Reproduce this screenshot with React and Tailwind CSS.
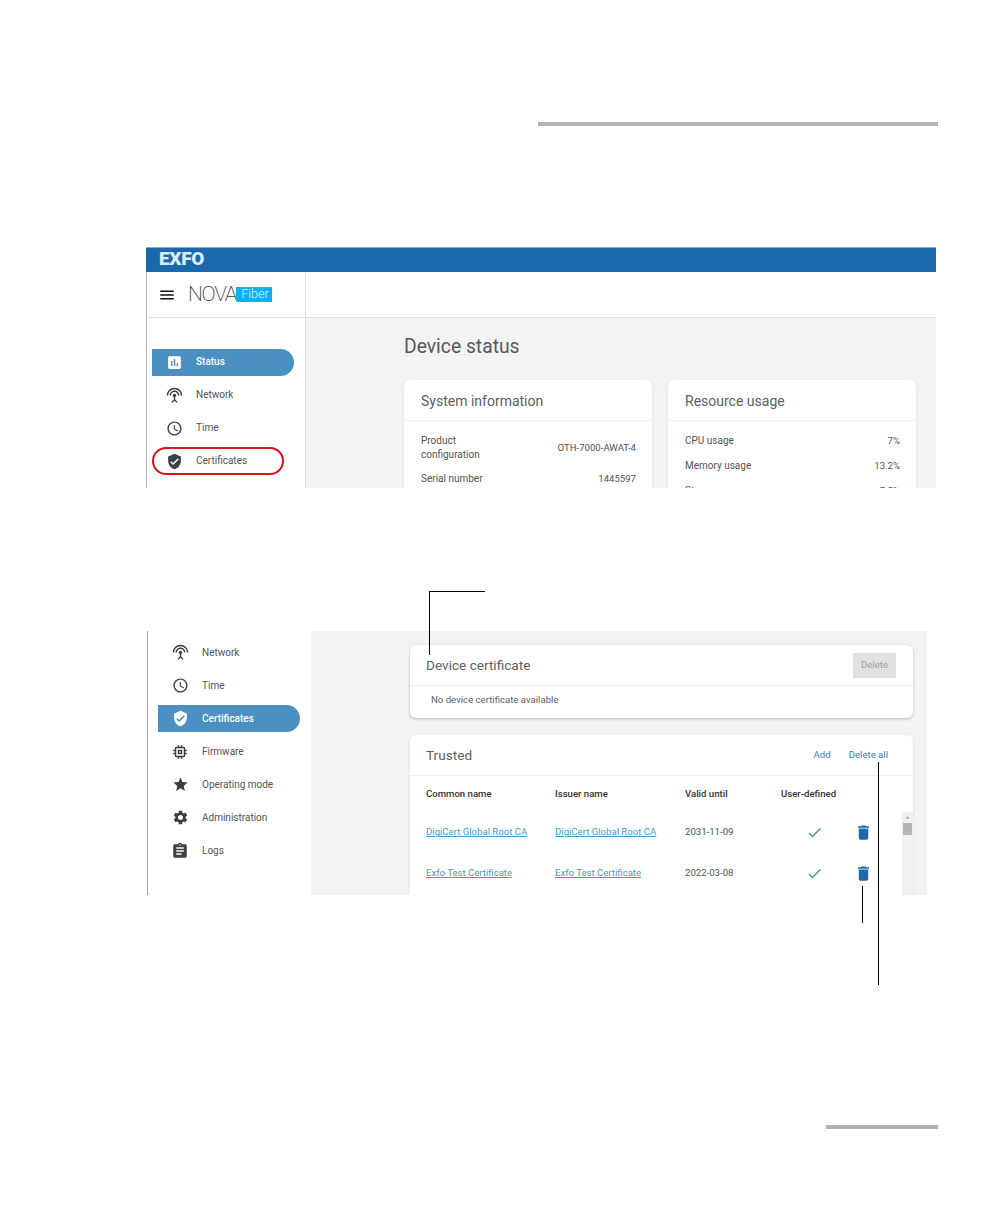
import React from "react";
import {
  MdAssessment, MdSettingsInputAntenna, MdAccessTime, MdVerifiedUser, MdMemory,
  MdStar, MdSettings, MdAssignment, MdDelete, MdCheck, MdMenu, MdArrowDropUp,
} from "react-icons/md";

function NavRow({ icon: Icon, label, active, raised, size = 17 }) {
  return (
    <div className={"flex h-[27px] items-center rounded-r-full " + (active ? "bg-[#4a90c2] font-medium text-white" : "text-[#505458]")}>
      <span className="flex w-[44px] shrink-0 justify-center">
        <Icon size={size} className={active ? "text-white" : "text-[#3c4043]"} />
      </span>
      <span className={"text-[10px] leading-none " + (raised ? "pb-[1px]" : "")}>{label}</span>
    </div>
  );
}

function InfoRow({ label, value, h = "h-[25px]" }) {
  return (
    <div className={"flex items-center justify-between text-[10px] leading-[14px] text-[#505458] " + h}>
      <span>{label}</span>
      <span className="text-[9.6px]">{value}</span>
    </div>
  );
}

function CardHeader({ title }) {
  return (
    <div className="flex h-[41px] items-center border-b border-[#eeeeee] px-[17px] pt-[3px]">
      <span className="text-[14px] text-[#5c6064]">{title}</span>
    </div>
  );
}

function Row({ name, date }) {
  const link = "text-[#4a9bc7] underline";
  return (
    <div className="flex h-[41px] items-center text-[9.6px]">
      <span className={"w-[129px] " + link}>{name}</span>
      <span className={"w-[130px] " + link}>{name}</span>
      <span className="w-[96px] text-[#505458]">{date}</span>
      <span className="flex w-[67px] justify-center"><MdCheck size={17} className="text-[#4a90c2]" /></span>
      <span className="flex w-[30px] justify-center"><MdDelete size={19} className="text-[#1d68ad]" /></span>
    </div>
  );
}

export default function App() {
  return (
    <div className="relative h-[1224px] w-[1008px] overflow-hidden bg-white font-['Roboto',sans-serif]">
      <div className="ml-[538px] mt-[122px] h-[4px] w-[400px] bg-[#b3b3b3]" />

      {/* Figure 1 */}
      <div className="ml-[146px] mt-[121px] flex h-[241px] w-[790px] flex-col overflow-hidden">
        <div className="flex h-[25px] shrink-0 items-center border-t border-[#8fa9bf] bg-[#1b69ad] pb-[3px] pl-[13px] text-[19px] font-black leading-none tracking-[-0.3px] text-[#dfeaf3]">
          EXFO
        </div>
        <div className="flex min-h-0 flex-1 border-l border-[#b5b5b5]">
          <div className="flex w-[159px] shrink-0 flex-col border-r border-[#dddddd] bg-white">
            <div className="flex h-[46px] shrink-0 items-center border-b border-[#dddddd] pl-[11px]">
              <MdMenu size={18} className="text-[#111111]" />
              <span className="ml-[12px] text-[21px] font-extralight leading-none tracking-[-1.3px] text-[#3a3a3a]">NOVA</span>
              <span className="flex h-[15px] w-[36px] items-center bg-[#0db2ec] pl-[5px] text-[12.5px] font-light leading-none text-[#d8f3fc]">Fiber</span>
            </div>
            <div className="flex flex-col gap-[6px] pl-[5px] pr-[11px] pt-[31px]">
              <NavRow icon={MdAssessment} label="Status" active raised />
              <NavRow icon={MdSettingsInputAntenna} label="Network" raised />
              <NavRow icon={MdAccessTime} label="Time" raised />
              <NavRow icon={MdVerifiedUser} label="Certificates" raised />
            </div>
          </div>
          <div className="flex min-w-0 flex-1 flex-col">
            <div className="h-[46px] shrink-0 border-b border-[#dddddd] bg-white" />
            <div className="flex-1 bg-[#f3f3f3] pl-[98px] pr-[20px] pt-[17px]">
              <h1 className="text-[19.3px] leading-[24px] text-[#55595c]">Device status</h1>
              <div className="mt-[21px] flex gap-[16px]">
                <div className="h-[200px] w-[248px] rounded-t-[6px] bg-white shadow-sm">
                  <CardHeader title="System information" />
                  <div className="pl-[17px] pr-4 pt-[13px]">
                    <InfoRow h="h-[28px]" label={<>Product<br />configuration</>} value="OTH-7000-AWAT-4" />
                    <div className="mt-[4px]"><InfoRow label="Serial number" value="1445597" /></div>
                  </div>
                </div>
                <div className="h-[200px] w-[248px] rounded-t-[6px] bg-white shadow-sm">
                  <CardHeader title="Resource usage" />
                  <div className="pl-[17px] pr-4 pt-[7px]">
                    <InfoRow label="CPU usage" value="7%" />
                    <InfoRow label="Memory usage" value="13.2%" />
                    <InfoRow label="Storage usage" value="7.5%" />
                  </div>
                </div>
              </div>
            </div>
          </div>
        </div>
      </div>

      {/* Figure 2 */}
      <div className="ml-[147px] mt-[143px] flex h-[264px] w-[780px] overflow-hidden">
        <div className="flex w-[164px] shrink-0 flex-col gap-[6px] border-l border-[#a8a8a8] bg-white pl-[10px] pr-[11px] pt-[8px]">
          <NavRow icon={MdSettingsInputAntenna} label="Network" />
          <NavRow icon={MdAccessTime} label="Time" />
          <NavRow icon={MdVerifiedUser} label="Certificates" active />
          <NavRow icon={MdMemory} size={18} label="Firmware" />
          <NavRow icon={MdStar} label="Operating mode" />
          <NavRow icon={MdSettings} label="Administration" />
          <NavRow icon={MdAssignment} size={18} label="Logs" />
        </div>
        <div className="flex min-w-0 flex-1 flex-col gap-[17px] bg-[#f3f3f3] pl-[99px] pr-[14px] pt-[14px]">
          <div className="h-[73px] shrink-0 rounded-[6px] bg-white shadow-[0_1px_3px_rgba(0,0,0,0.25)]">
            <div className="flex h-[41px] items-center justify-between border-b border-[#eeeeee] pl-4 pr-[17px]">
              <span className="text-[13.6px] text-[#5c6064]">Device certificate</span>
              <span className="flex h-[25px] w-[43px] items-center justify-center bg-[#e0e0e0] text-[9.6px] text-[#a3a3a3]">Delete</span>
            </div>
            <div className="flex h-[29px] items-center pl-[21px] text-[9.6px] text-[#5c6064]">No device certificate available</div>
          </div>
          <div className="relative h-[200px] shrink-0 rounded-t-[6px] bg-white shadow-sm">
            <div className="flex h-[41px] items-center justify-between border-b border-[#eeeeee] pl-4 pr-[25px] pt-[1px]">
              <span className="text-[13.6px] text-[#5c6064]">Trusted</span>
              <div className="flex gap-[18px] pb-[1px] text-[9.6px] text-[#3f7fae]">
                <span>Add</span>
                <span>Delete all</span>
              </div>
            </div>
            <div className="pl-4">
              <div className="flex h-[36px] items-center pt-[1px] text-[9.6px] font-medium text-[#333333]">
                <span className="w-[129px]">Common name</span>
                <span className="w-[130px]">Issuer name</span>
                <span className="w-[96px]">Valid until</span>
                <span>User-defined</span>
              </div>
              <Row name="DigiCert Global Root CA" date="2031-11-09" />
              <Row name="Exfo Test Certificate" date="2022-03-08" />
            </div>
            <div className="absolute right-0 top-[77px] flex h-[100px] w-[11px] flex-col items-center bg-[#f1f1f1]">
              <MdArrowDropUp size={11} className="text-[#a3a3a3]" />
              <div className="h-[12px] w-[9px] bg-[#b5b5b5]" />
            </div>
          </div>
        </div>
      </div>

      <div className="ml-[826px] mt-[230px] h-[4px] w-[112px] bg-[#b3b3b3]" />

      {/* Red highlight */}
      <div className="absolute left-[152px] top-[447px] h-[28px] w-[132px] rounded-full border-2 border-[#d8151c]" />

      {/* Callout lines */}
      <div className="absolute left-[429px] top-[591px] h-[1px] w-[56px] bg-black" />
      <div className="absolute left-[429px] top-[591px] h-[64px] w-[1px] bg-black" />
      <div className="absolute left-[862px] top-[886px] h-[37px] w-[1px] bg-black" />
      <div className="absolute left-[878px] top-[762px] h-[223px] w-[1px] bg-black" />
    </div>
  );
}
